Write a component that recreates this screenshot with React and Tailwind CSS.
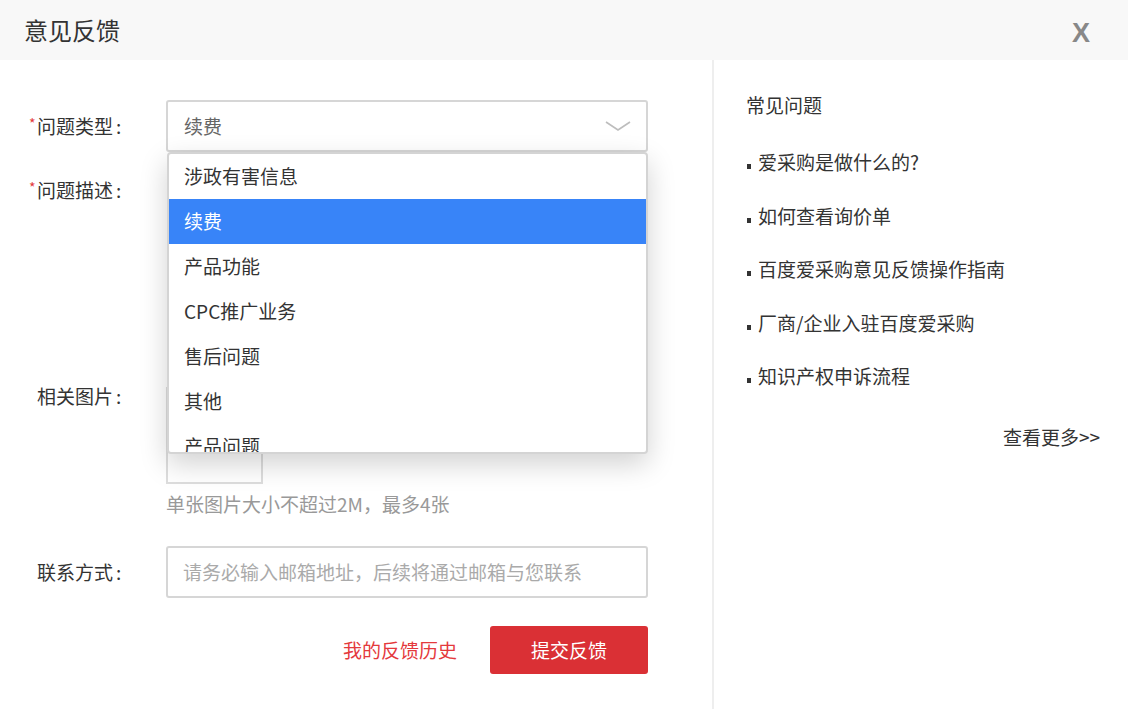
const font = { fontFamily: '"Noto Sans CJK SC", "Noto Sans", sans-serif' };

const options = ['涉政有害信息', '续费', '产品功能', 'CPC推广业务', '售后问题', '其他', '产品问题'];
const faqs = ['爱采购是做什么的?', '如何查看询价单', '百度爱采购意见反馈操作指南', '厂商/企业入驻百度爱采购', '知识产权申诉流程'];

function Label({ children, required, className = '' }) {
  return (
    <div className={'w-[166px] shrink-0 pl-[37px] text-[19px] leading-[26px] text-[#333] ' + className}>
      <span className="relative">
        {required && <span className="absolute left-[-8px] top-[-2px] text-[#e4393c] text-[14px]">*</span>}
        {children}<span className="ml-[3px]">:</span>
      </span>
    </div>
  );
}

export default function App() {
  return (
    <div className="w-[1128px] h-[709px] bg-white flex flex-col overflow-hidden" style={font}>
      <div className="h-[60px] bg-[#f8f8f8] flex items-center justify-between pl-[24px] pr-[38px] shrink-0">
        <h1 className="text-[24px] text-[#333]">意见反馈</h1>
        <span className="text-[#888] text-[27px] font-bold mt-[6px]" style={{ fontFamily: '"Liberation Sans", sans-serif' }}>X</span>
      </div>

      <div className="flex flex-1">
        <div className="w-[714px] shrink-0 border-r-2 border-[#eee] pt-[40px] pr-[64px]">
          <div className="flex items-start">
            <Label required className="mt-[13px]">问题类型</Label>
            <div className="relative flex-1">
              <div className="h-[52px] border-2 border-[#d6d6d6] rounded-[3px] flex items-center justify-between pl-[16px] pr-[15px]">
                <span className="text-[19px] text-[#666]">续费</span>
                <svg width="26" height="10" viewBox="0 0 26 10" fill="none">
                  <polyline points="1,1 13,9 25,1" stroke="#bdbdbd" strokeWidth="1.6" />
                </svg>
              </div>
              <div className="absolute left-px right-0 top-[52px] h-[302px] z-10 bg-white border-2 border-[#d4d4d4] rounded-[4px] overflow-hidden shadow-[0_10px_28px_rgba(0,0,0,0.18)]">
                {options.map((o) => (
                  <div
                    key={o}
                    className={
                      'h-[45px] flex items-center pl-[15px] text-[19px] ' +
                      (o === '续费' ? 'bg-[#3884f8] text-white' : 'text-[#333]')
                    }
                  >
                    {o}
                  </div>
                ))}
              </div>
            </div>
          </div>

          <div className="flex items-start mt-[12px]">
            <Label required className="mt-[13px]">问题描述</Label>
            <div className="flex-1 ml-[3px] h-[190px] border-2 border-[#d6d6d6] rounded-[3px]" />
          </div>

          <div className="flex items-start mt-[29px]">
            <Label>相关图片</Label>
            <div className="flex-1">
              <div className="w-[97px] h-[97px] border-2 border-[#ddd] mt-[4px]" />
              <p className="text-[19px] text-[#999] mt-[7px] leading-[26px]">单张图片大小不超过2M，最多4张</p>
            </div>
          </div>

          <div className="flex items-center mt-[29px]">
            <Label>联系方式</Label>
            <div className="flex-1 h-[52px] border-2 border-[#d6d6d6] rounded-[3px] flex items-center pl-[15px]">
              <span className="text-[19px] text-[#aaa]">请务必输入邮箱地址，后续将通过邮箱与您联系</span>
            </div>
          </div>

          <div className="flex items-center justify-end gap-[33px] mt-[28px]">
            <span className="text-[19px] text-[#e4393c]">我的反馈历史</span>
            <button className="w-[158px] h-[48px] bg-[#da3035] rounded-[3px] text-white text-[19px]">提交反馈</button>
          </div>
        </div>

        <div className="flex-1 pl-[32px] pr-[28px] pt-[32px] text-[#333]">
          <h2 className="text-[19px] leading-[26px]">常见问题</h2>
          <ul className="mt-[31px] flex flex-col gap-[27.5px]">
            {faqs.map((f) => (
              <li key={f} className="flex items-end text-[19px] leading-[26px]">
                <span className="w-[4px] h-[5px] bg-[#333] mb-[6px] mr-[7px] ml-[1px]" />
                {f}
              </li>
            ))}
          </ul>
          <div className="text-right text-[19px] leading-[26px] mt-[35px]">查看更多&gt;&gt;</div>
        </div>
      </div>
    </div>
  );
}
